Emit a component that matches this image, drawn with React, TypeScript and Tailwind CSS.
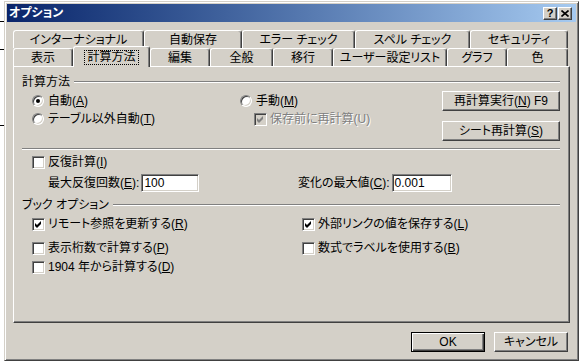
import React from 'react';

const raised =
  'border border-t-white border-l-white border-r-[#404040] border-b-[#404040] shadow-[inset_-1px_-1px_#808080]';
const sunken =
  'border border-t-[#808080] border-l-[#808080] border-r-white border-b-white shadow-[inset_1px_1px_#404040,inset_-1px_-1px_#d4d0c8]';

const Acc = ({ k }: { k: string }) => (
  <>
    (<u>{k}</u>)
  </>
);

const Radio = ({ on }: { on?: boolean }) => (
  <span className={`flex h-[12px] w-[12px] shrink-0 items-center justify-center rounded-full bg-white ${sunken}`}>
    {on && <span className="h-[4px] w-[4px] rounded-full bg-black" />}
  </span>
);

const Check = ({ on, disabled }: { on?: boolean; disabled?: boolean }) => (
  <span className={`flex h-[13px] w-[13px] shrink-0 ${disabled ? 'bg-[#d4d0c8]' : 'bg-white'} ${sunken}`}>
    {on && (
      <svg viewBox="0 0 11 11" width="11" height="11">
        <path d="M2 4 L4 6 L8 2 L8 5 L4 9 L2 7 Z" fill={disabled ? '#808080' : '#000'} />
      </svg>
    )}
  </span>
);

const Item = ({ box, children, gap = 'gap-[3px]', disabled, className = '' }: any) => (
  <div className={`flex h-[14px] items-center ${gap} ${className}`}>
    {box}
    <span className={disabled ? 'text-[#808080] [text-shadow:1px_1px_0_#fff]' : ''}>{children}</span>
  </div>
);

const GroupLabel = ({ children, className = '' }: any) => (
  <div className={`flex h-[14px] items-center pr-[9px] ${className}`}>
    <span>{children}</span>
    <div className="ml-[4px] h-[2px] flex-1 border-t border-t-[#808080] border-b border-b-white" />
  </div>
);

const Tab = ({ w, children }: { w: string; children: React.ReactNode }) => (
  <div
    className={`flex h-[18px] ${w} items-center justify-center rounded-t-[3px] border-l border-t border-r border-l-white border-t-white border-r-[#404040] shadow-[inset_-1px_0_#808080]`}
  >
    {children}
  </div>
);

const Button = ({ children, className = '' }: any) => (
  <div className={`flex items-center justify-center bg-[#d4d0c8] ${raised} ${className}`}>{children}</div>
);

export default function App() {
  return (
    <div className="flex h-[364px] w-[580px] overflow-hidden bg-white font-['Liberation_Sans','Noto_Sans_CJK_JP',sans-serif] text-[12px] leading-[14px] text-black [font-feature-settings:'palt']">
      {/* spreadsheet grid peeking out behind the dialog */}
      <div className="flex w-[4px] flex-col">
        <div className="h-[22px] border-b border-black" />
        <div className="h-[28px] border-b border-black" />
        <div className="h-[48px]" />
        <div className="h-[28px] border-b border-black" />
      </div>

      {/* dialog */}
      <div className="mt-[1px] flex h-[360px] w-[575px] flex-col border border-t-[#d4d0c8] border-l-[#d4d0c8] border-r-[#404040] border-b-[#404040] bg-[#d4d0c8] p-[2px] shadow-[inset_1px_1px_#fff,inset_-1px_-1px_#808080]">
        {/* title bar */}
        <div className="flex h-[18px] items-center bg-linear-to-r from-[#0a246a] to-[#a6caf0] pl-[2px] pr-[4px]">
          <span className="font-bold text-white">オプション</span>
          <div className="ml-auto flex gap-[1px]">
            <Button className="h-[13px] w-[14px]">
              <span className="text-[11px] font-bold leading-none">?</span>
            </Button>
            <Button className="h-[13px] w-[14px]">
              <svg viewBox="0 0 8 7" width="8" height="7">
                <path d="M0.5 0.5 L7.5 6.5 M7.5 0.5 L0.5 6.5" stroke="#000" strokeWidth="1.6" />
              </svg>
            </Button>
          </div>
        </div>

        <div className="flex flex-col px-[6px] pt-[8px]">
          {/* back row of tabs */}
          <div className="flex">
            <Tab w="w-[131px]">インターナショナル</Tab>
            <Tab w="w-[98px]">自動保存</Tab>
            <Tab w="w-[113px]">エラー チェック</Tab>
            <Tab w="w-[115px]">スペル チェック</Tab>
            <Tab w="w-[98px]">セキュリティ</Tab>
          </div>
          {/* front row of tabs */}
          <div className="flex h-[18px] items-end">
            <Tab w="w-[60px]">表示</Tab>
            <div className="relative z-10 -mb-[1px] flex h-[21px] w-[77px] items-center justify-center rounded-t-[3px] border-l border-t border-r border-l-white border-t-white border-r-[#404040] bg-[#d4d0c8] shadow-[inset_-1px_0_#808080]">
              <span className="border border-dotted border-black px-[2px] leading-[13px]">計算方法</span>
            </div>
            <Tab w="w-[60px]">編集</Tab>
            <Tab w="w-[63px]">全般</Tab>
            <Tab w="w-[60px]">移行</Tab>
            <Tab w="w-[114px]">ユーザー設定リスト</Tab>
            <Tab w="w-[60px]">グラフ</Tab>
            <Tab w="w-[61px]">色</Tab>
          </div>

          {/* tab page */}
          <div className={`flex h-[257px] flex-col pl-[8px] ${raised}`}>
            <GroupLabel className="mt-[8px]">計算方法</GroupLabel>

            <div className="flex">
              <div className="flex w-[218px] flex-col gap-[4px] pl-[10px] pt-[5px]">
                <Item box={<Radio on />} gap="gap-[4px]">
                  自動<Acc k="A" />
                </Item>
                <Item box={<Radio />} gap="gap-[4px]">
                  テーブル以外自動<Acc k="T" />
                </Item>
              </div>
              <div className="flex w-[202px] flex-col gap-[4px] pt-[5px]">
                <Item box={<Radio />} gap="gap-[4px]">
                  手動<Acc k="M" />
                </Item>
                <Item box={<Check on disabled />} disabled className="pl-[14px]">
                  保存前に再計算(U)
                </Item>
              </div>
              <div className="flex w-[118px] flex-col gap-[10px] pt-[2px]">
                <Button className="h-[20px]">
                  再計算実行<Acc k="N" />&nbsp;F9
                </Button>
                <Button className="h-[20px]">
                  シート再計算<Acc k="S" />
                </Button>
              </div>
            </div>

            <div className="mr-[9px] mt-[7px] h-[2px] border-t border-t-[#808080] border-b border-b-white" />

            <Item box={<Check />} className="ml-[10px] mt-[5px]">
              反復計算<Acc k="I" />
            </Item>

            <div className="mt-[5px] flex h-[18px] items-center">
              <div className="flex w-[276px] items-center gap-[2px] pl-[26px]">
                <span>
                  最大反復回数<Acc k="E" />:
                </span>
                <div className={`flex h-[18px] w-[58px] items-center bg-white px-[2px] ${sunken}`}>100</div>
              </div>
              <div className="flex items-center gap-[2px]">
                <span>
                  変化の最大値<Acc k="C" />:
                </span>
                <div className={`flex h-[18px] w-[60px] items-center bg-white px-[2px] ${sunken}`}>0.001</div>
              </div>
            </div>

            <GroupLabel className="mt-[6px]">ブック オプション</GroupLabel>

            <div className="flex">
              <div className="flex w-[280px] flex-col pl-[10px]">
                <Item box={<Check on />} className="mt-[5px]">
                  リモート参照を更新する<Acc k="R" />
                </Item>
                <Item box={<Check />} className="mt-[10px]">
                  表示桁数で計算する<Acc k="P" />
                </Item>
                <Item box={<Check />} className="mt-[5px]">
                  1904 年から計算する<Acc k="D" />
                </Item>
              </div>
              <div className="flex flex-col">
                <Item box={<Check on />} className="mt-[5px]">
                  外部リンクの値を保存する<Acc k="L" />
                </Item>
                <Item box={<Check />} className="mt-[10px]">
                  数式でラベルを使用する<Acc k="B" />
                </Item>
              </div>
            </div>
          </div>

          {/* dialog buttons */}
          <div className="mt-[9px] flex justify-end gap-[9px] pr-[2px]">
            <div className="flex h-[20px] w-[74px] items-center justify-center border border-black bg-[#d4d0c8] shadow-[inset_1px_1px_#fff,inset_-1px_-1px_#404040,inset_-2px_-2px_#808080]">
              OK
            </div>
            <Button className="h-[20px] w-[74px]">キャンセル</Button>
          </div>
        </div>
      </div>
    </div>
  );
}
